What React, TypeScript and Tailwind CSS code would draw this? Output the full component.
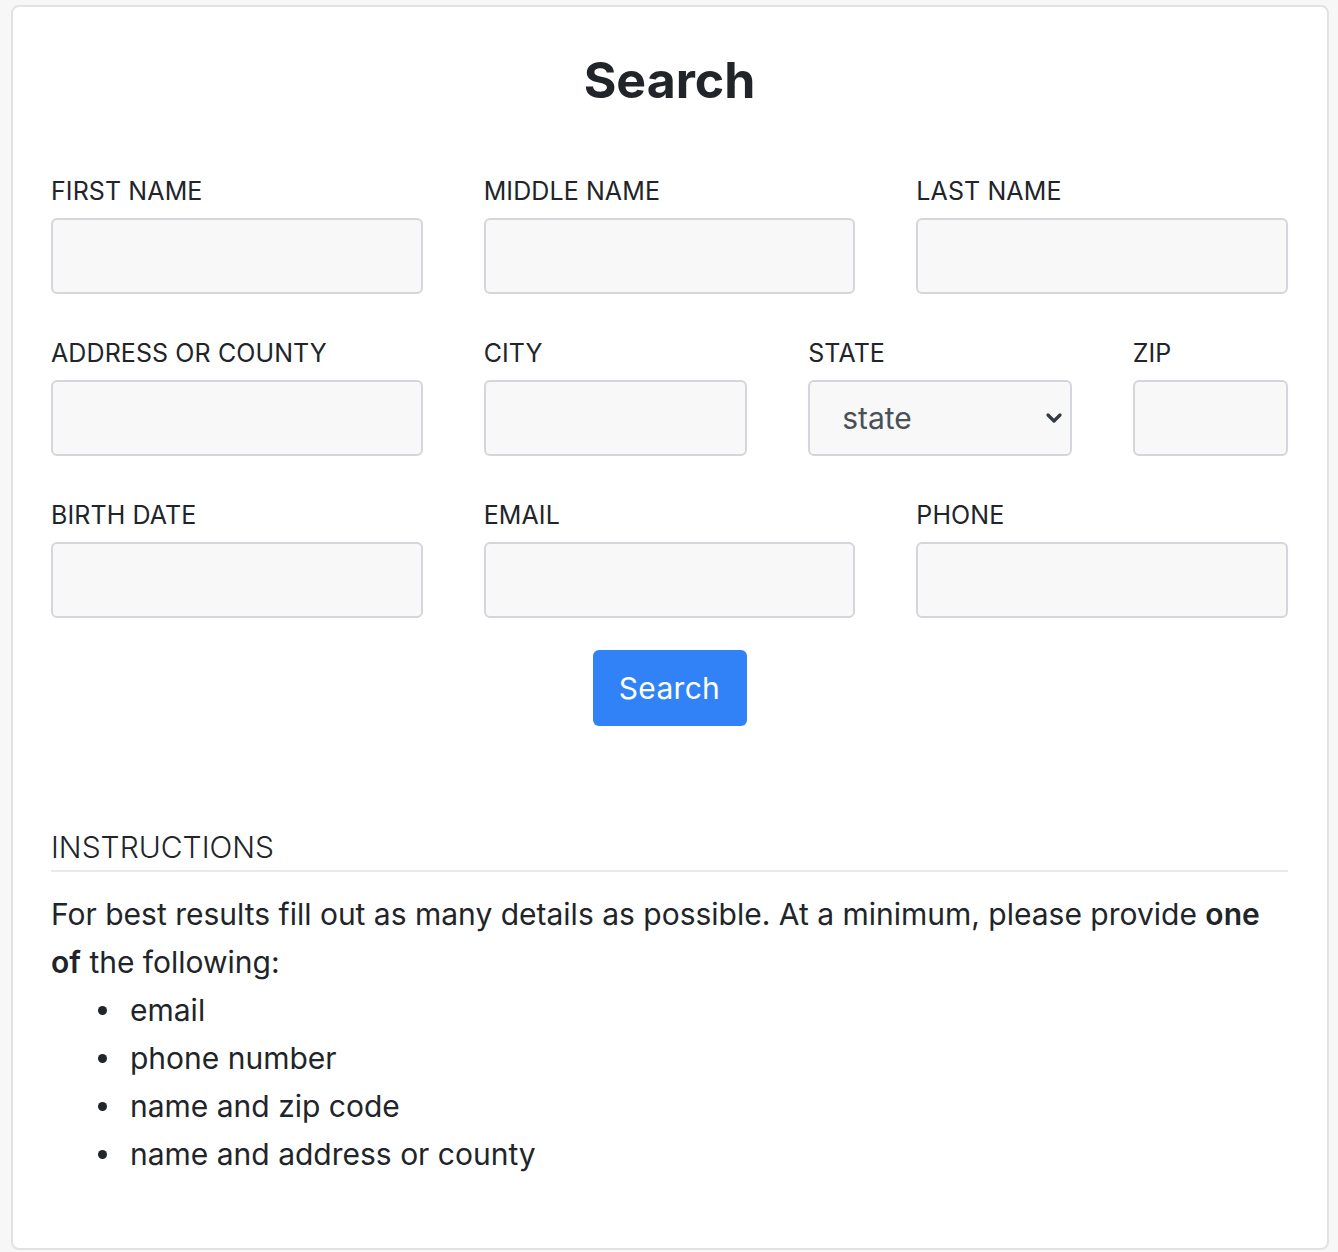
import React from "react";

const font = { fontFamily: "Inter, 'Noto Sans', sans-serif" };

function Label({ children }: { children: React.ReactNode }) {
  return (
    <label className="block h-[36px] text-[25px] tracking-[0.1px] leading-[36px] text-[#212529] mb-[9px]">
      {children}
    </label>
  );
}

function Field({ label, span }: { label: string; span: string }) {
  return (
    <div className={span}>
      <Label>{label}</Label>
      <input
        type="text"
        className="block w-full h-[76px] rounded-[6px] border-2 border-[#d3d7db] bg-[#f8f8f8] px-4 text-[30px] outline-none"
      />
    </div>
  );
}

function Bullet({ children }: { children: React.ReactNode }) {
  return (
    <li className="flex items-center h-[48px]">
      <span className="ml-[47px] mr-[23px] h-[9px] w-[9px] rounded-full bg-[#212529]" />
      <span>{children}</span>
    </li>
  );
}

export default function App() {
  return (
    <div className="min-h-screen bg-[#f7f7f7] pl-[11px] pr-[9px] pt-[5px] pb-[3px]" style={font}>
      <div className="rounded-[8px] border-2 border-[#e2e2e2] bg-white pl-[38px] pr-[39px] pt-[43px] pb-[70px]">
        <h1 className="text-center text-[50px] leading-[60px] font-bold text-[#212529] mb-[63px]">Search</h1>
        <div className="grid grid-cols-12 gap-x-[61px] gap-y-[41px]">
          <Field label="FIRST NAME" span="col-span-4" />
          <Field label="MIDDLE NAME" span="col-span-4" />
          <Field label="LAST NAME" span="col-span-4" />
          <Field label="ADDRESS OR COUNTY" span="col-span-4" />
          <Field label="CITY" span="col-span-3" />
          <div className="col-span-3">
            <Label>STATE</Label>
            <div className="relative">
              <select className="block w-full h-[76px] appearance-none rounded-[6px] border-2 border-[#d3d7db] bg-[#f8f8f8] pl-[32px] text-[30px] text-[#495057] outline-none">
                <option>state</option>
              </select>
              <svg
                className="pointer-events-none absolute right-[9px] top-1/2 -translate-y-1/2"
                width="18"
                height="14"
                viewBox="0 0 18 14"
              >
                <path d="M3 4 L9 10 L15 4" fill="none" stroke="#343a40" strokeWidth="3.2" strokeLinecap="round" strokeLinejoin="round" />
              </svg>
            </div>
          </div>
          <Field label="ZIP" span="col-span-2" />
          <Field label="BIRTH DATE" span="col-span-4" />
          <Field label="EMAIL" span="col-span-4" />
          <Field label="PHONE" span="col-span-4" />
        </div>
        <div className="flex justify-center mt-[32px]">
          <button className="h-[76px] w-[154px] rounded-[6px] bg-[#3182f6] text-[30px] tracking-[0.3px] text-white">Search</button>
        </div>
        <h2 className="mt-[103px] text-[30px] leading-[36px] font-light text-[#212529]">INSTRUCTIONS</h2>
        <hr className="mt-[5px] border-0 border-t-2 border-[#e9e9e9]" />
        <p className="mt-[18px] text-[30px] leading-[48px] text-[#212529]">
          For best results fill out as many details as possible. At a minimum, please provide{" "}
          <strong className="font-semibold">one of</strong> the following:
        </p>
        <ul className="text-[30px] leading-[48px] text-[#212529]">
          <Bullet>email</Bullet>
          <Bullet>phone number</Bullet>
          <Bullet>name and zip code</Bullet>
          <Bullet>name and address or county</Bullet>
        </ul>
      </div>
    </div>
  );
}
